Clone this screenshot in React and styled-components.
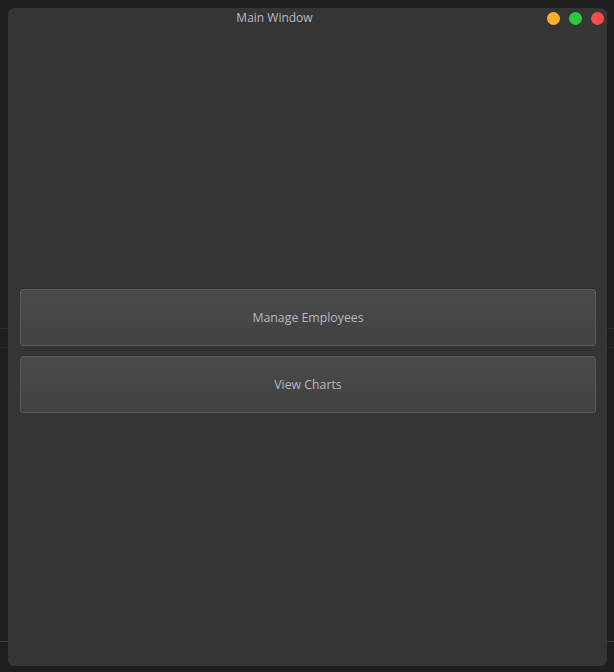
import React from "react";
import styled, { createGlobalStyle } from "styled-components";

const Global = createGlobalStyle`
  html, body { margin: 0; padding: 0; }
  body {
    width: 614px;
    height: 672px;
    overflow: hidden;
    background-color: #1e1e1e;
    background-image:
      linear-gradient(#2c2c2c, #2c2c2c),
      linear-gradient(#2c2c2c, #2c2c2c),
      linear-gradient(#3a3a3a, #3a3a3a);
    background-size: 100% 1px, 100% 1px, 100% 1px;
    background-position: 0 328px, 0 347px, 0 641px;
    background-repeat: no-repeat;
    font-family: "Open Sans", "Noto Sans", "DejaVu Sans", sans-serif;
  }
`;

const Desktop = styled.div`
  box-sizing: border-box;
  height: 672px;
  padding: 8px 7px 6px 8px;
  display: flex;
`;

const Window = styled.div`
  flex: 1;
  display: flex;
  flex-direction: column;
  background: #353535;
  border-radius: 6px;
  overflow: hidden;
`;

const TitleBar = styled.div`
  height: 28px;
  flex: none;
  display: flex;
  align-items: flex-start;
  padding-right: 3px;
`;

const Title = styled.span`
  flex: 1;
  text-align: center;
  padding-right: 6px;
  line-height: 20px;
  font-size: 12px;
  color: #b8bcc0;
`;

const Lights = styled.div`
  margin-top: 4px;
  display: flex;
  gap: 9px;
`;

const Light = styled.span`
  width: 13px;
  height: 13px;
  border-radius: 50%;
  background: ${(p) => p.$c};
`;

const Content = styled.div`
  flex: 1;
  display: flex;
  flex-direction: column;
  justify-content: center;
  gap: 10px;
  padding: 0 11px 0 12px;
`;

const Button = styled.button`
  height: 57px;
  box-sizing: border-box;
  border: 1px solid #5a5a5a;
  border-radius: 3px;
  background: linear-gradient(#4a4a4a, #424242);
  box-shadow: 0 -1px 0 #2a2a2a;
  color: #b4b8bc;
  font-family: inherit;
  font-size: 12.3px;
  cursor: pointer;
`;

export default function App() {
  return (
    <>
      <Global />
      <Desktop>
        <Window>
          <TitleBar>
            <Title>Main Window</Title>
            <Lights>
              <Light $c="#fdb02b" />
              <Light $c="#29c63f" />
              <Light $c="#fe4a4a" />
            </Lights>
          </TitleBar>
          <Content>
            <Button>Manage Employees</Button>
            <Button>View Charts</Button>
          </Content>
        </Window>
      </Desktop>
    </>
  );
}
